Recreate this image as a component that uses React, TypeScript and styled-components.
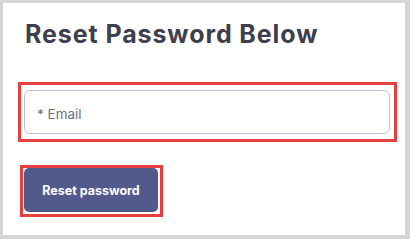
import React from 'react';
import styled, { createGlobalStyle } from 'styled-components';

const GlobalStyle = createGlobalStyle`
  body {
    margin: 0;
    background: #d5d5d5;
    font-family: 'Inter', 'Liberation Sans', sans-serif;
  }
`;

const Page = styled.div`
  padding: 3px;
`;

const Card = styled.div`
  width: 402px;
  height: 232px;
  box-sizing: border-box;
  background: #ffffff;
  padding: 14px 0 0 15px;
  display: flex;
  flex-direction: column;
  align-items: flex-start;
`;

const Title = styled.h2`
  margin: 0 0 0 7px;
  font-size: 25px;
  line-height: 34px;
  font-weight: 700;
  color: #3d3f4e;
  letter-spacing: 0.9px;
`;

const Highlight = styled.div<{ $pad: string; $top: number; $left?: number }>`
  border: 3px solid #e3403f;
  padding: ${(p) => p.$pad};
  margin-top: ${(p) => p.$top}px;
  margin-left: ${(p) => p.$left ?? 0}px;
  display: flex;
`;

const Input = styled.input`
  width: 366px;
  height: 44px;
  box-sizing: border-box;
  border: 1px solid #bcc0e0;
  border-radius: 6px;
  padding: 4px 12px 0;
  font-family: inherit;
  font-size: 13.5px;
  color: #3d3f4e;
  outline: none;

  &::placeholder {
    color: #6c6f80;
  }
`;

const Button = styled.button`
  width: 134px;
  height: 44px;
  border: none;
  border-radius: 5px;
  background: #525a8b;
  color: #ffffff;
  font-family: inherit;
  font-size: 12.5px;
  font-weight: 700;
  cursor: pointer;
`;

const App = () => {
  return (
    <Page>
      <GlobalStyle />
      <Card>
        <Title>Reset Password Below</Title>
        <Highlight $pad='5px 4px 5px 3px' $top={31}>
          <Input placeholder='* Email' />
        </Highlight>
        <Highlight $pad='0 2px 2px 1px' $top={23} $left={2}>
          <Button>Reset password</Button>
        </Highlight>
      </Card>
    </Page>
  );
};

export default App;
